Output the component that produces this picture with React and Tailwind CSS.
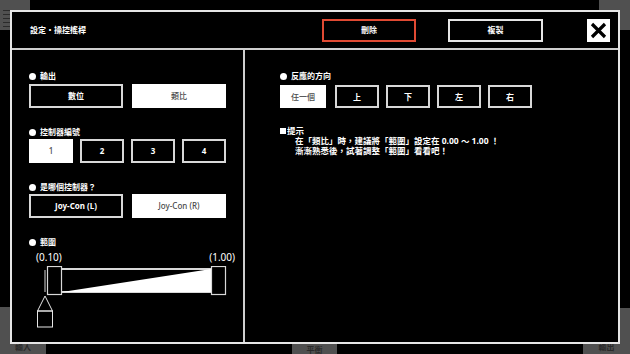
import React from 'react';

const FONT = "font-['Noto_Sans','Noto_Sans_CJK_TC',sans-serif]";

function Label({ text }) {
  return (
    <div className="h-[12px] flex items-center gap-[4px] text-white text-[8px] font-bold leading-none">
      <span className="w-[7px] h-[7px] rounded-full bg-white" />
      <span>{text}</span>
    </div>
  );
}

function Opt({ text, active, size }) {
  return (
    <div
      className={
        'flex items-center justify-center text-[8px] leading-none border-2 ' +
        size +
        (active
          ? ' bg-white border-white text-[#4a4a4a] font-medium'
          : ' bg-black border-[#d8d8d8] text-white font-bold')
      }
    >
      {text}
    </div>
  );
}

function RangeSlider() {
  return (
    <svg width="200" height="62" viewBox="0 0 200 62" className="block">
      {/* band */}
      <line x1="33" y1="3" x2="182" y2="3" stroke="#d8d8d8" strokeWidth="2" />
      <line x1="33" y1="26" x2="182" y2="26" stroke="#d8d8d8" strokeWidth="2" />
      <polygon points="33,26 182,3 182,26" fill="#fff" />
      {/* handles */}
      <line x1="16" y1="4" x2="16" y2="26" stroke="#d8d8d8" strokeWidth="1" />
      <rect x="18.5" y="0.5" width="14" height="28" fill="#000" stroke="#d8d8d8" strokeWidth="1.2" />
      <rect x="182.5" y="0.5" width="14" height="28" fill="#000" stroke="#d8d8d8" strokeWidth="1.2" />
      {/* pointer */}
      <polygon points="16,30 8.5,45 23.5,45" fill="none" stroke="#e6e6e6" strokeWidth="1" />
      <rect x="8.5" y="45" width="15" height="16" fill="none" stroke="#e6e6e6" strokeWidth="1" />
    </svg>
  );
}

export default function App() {
  return (
    <div className={'relative w-[630px] h-[354px] bg-black overflow-hidden ' + FONT}>
      {/* panels behind the dialog */}
      <div className="absolute left-0 top-0 w-[30px] h-[30px] bg-[#505050] flex flex-col gap-[3px] pl-[3px] pt-[10px]">
        <span className="w-[7px] h-[1px] bg-[#2a2a2a]" />
        <span className="w-[7px] h-[1px] bg-[#2a2a2a]" />
        <span className="w-[7px] h-[1px] bg-[#2a2a2a]" />
        <span className="w-[7px] h-[1px] bg-[#2a2a2a]" />
        <span className="w-[7px] h-[1px] bg-[#2a2a2a]" />
      </div>
      <div className="absolute right-0 top-0 w-[31px] h-[30px] bg-[#505050]" />
      <div className="absolute left-0 top-[307px] w-[46px] h-[47px] bg-[#505050] flex items-end justify-center pb-[1px] text-[8px] text-[#2a2a2a] font-bold">輸入</div>
      <div className="absolute left-[292px] top-[343px] w-[45px] h-[11px] bg-[#505050] flex items-end justify-center text-[8px] leading-none text-[#2a2a2a] font-bold">平衡</div>
      <div className="absolute right-0 top-[308px] w-[47px] h-[46px] bg-[#505050] flex items-end justify-center pb-[1px] text-[8px] text-[#2a2a2a] font-bold">輸出</div>

      {/* dialog */}
      <div className="absolute left-[10px] top-[10px] w-[610px] h-[334px] border-2 border-[#e6e6e6] bg-black flex flex-col">
        <div className="h-[38px] shrink-0 flex items-center border-b-2 border-[#cfcfcf] pl-[18px] pr-[8px]">
          <div className="flex-1 text-white text-[8px] font-bold">設定・操控搖桿</div>
          <div className="w-[94px] h-[23px] border-2 border-[#e04a33] flex items-center justify-center text-white text-[8px] font-bold">刪除</div>
          <div className="ml-[32px] w-[95px] h-[23px] border-2 border-[#e6e6e6] flex items-center justify-center text-white text-[8px] font-bold">複製</div>
          <div className="ml-[44px] w-[23px] h-[23px] bg-white flex items-center justify-center">
            <svg width="17" height="17" viewBox="0 0 17 17">
              <path d="M2 2 L15 15 M15 2 L2 15" stroke="#000" strokeWidth="3.2" />
            </svg>
          </div>
        </div>

        <div className="flex-1 flex">
          <div className="w-[233px] shrink-0 border-r-2 border-[#cfcfcf] pl-[17px] pt-[20px]">
            <Label text="輸出" />
            <div className="mt-[2px] flex gap-[9px]">
              <Opt text="數位" size="w-[94px] h-[24px]" />
              <Opt text="類比" active size="w-[94px] h-[24px]" />
            </div>

            <div className="mt-[18px]">
              <Label text="控制器編號" />
            </div>
            <div className="mt-[1px] w-[197px] flex justify-between">
              <Opt text="1" active size="w-[44px] h-[24px]" />
              <Opt text="2" size="w-[44px] h-[24px]" />
              <Opt text="3" size="w-[44px] h-[24px]" />
              <Opt text="4" size="w-[44px] h-[24px]" />
            </div>

            <div className="mt-[18px]">
              <Label text="是哪個控制器？" />
            </div>
            <div className="mt-[1px] flex gap-[9px]">
              <Opt text="Joy-Con (L)" size="w-[94px] h-[24px]" />
              <Opt text="Joy-Con (R)" active size="w-[94px] h-[24px]" />
            </div>

            <div className="mt-[18px]">
              <Label text="範圍" />
            </div>
            <div className="mt-[3px] w-[206px] pl-[7px] flex justify-between text-white text-[10px] leading-[12px]">
              <span>(0.10)</span>
              <span>(1.00)</span>
            </div>
            <div className="mt-[3px]">
              <RangeSlider />
            </div>
          </div>

          <div className="flex-1 pl-[35px] pt-[20px]">
            <Label text="反應的方向" />
            <div className="mt-[3px] flex gap-[7px]">
              <Opt text="任一個" active size="w-[46px] h-[23px] mr-[2px]" />
              <Opt text="上" size="w-[44px] h-[23px]" />
              <Opt text="下" size="w-[44px] h-[23px]" />
              <Opt text="左" size="w-[44px] h-[23px]" />
              <Opt text="右" size="w-[44px] h-[23px]" />
            </div>

            <div className="mt-[18px] text-white text-[8.5px] font-bold leading-[10px]">
              <div className="flex items-center">
                <span className="w-[6px] h-[6px] bg-white mr-[1px]" />
                <span>提示</span>
              </div>
              <div className="pl-[15px]">在「類比」時，建議將「範圍」設定在 0.00 ～ 1.00 ！</div>
              <div className="pl-[15px]">漸漸熟悉後，試著調整「範圍」看看吧！</div>
            </div>
          </div>
        </div>
      </div>
    </div>
  );
}
